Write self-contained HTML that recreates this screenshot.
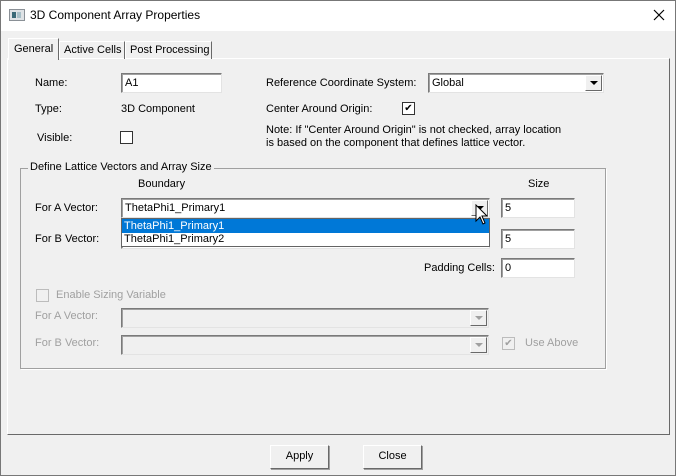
<!DOCTYPE html>
<html><head><meta charset="utf-8"><style>
*{box-sizing:border-box;margin:0;padding:0}
body{width:676px;height:476px;background:#f0f0f0;font:11px "Liberation Sans",sans-serif;color:#000;position:relative;overflow:hidden}
.a{position:absolute;white-space:nowrap}
.win{position:absolute;left:0;top:0;width:676px;height:476px;border:1px solid #777}
.tb{position:absolute;left:1px;top:1px;width:674px;height:30px;background:#fff}
.inp{position:absolute;background:#fff;border:1px solid #7a7a7a;border-right-color:#e3e3e3;border-bottom-color:#e3e3e3;box-shadow:inset 1px 1px 0 #a0a0a0;padding:1px 3px;line-height:16px}
.dis{background:#f0f0f0}
.btn{position:absolute;width:17px;height:16px;top:1px;right:1px;background:#f0f0f0;border:1px solid #fff;border-right-color:#696969;border-bottom-color:#696969}
.btn:after{content:"";position:absolute;left:4px;top:5px;border-left:4px solid transparent;border-right:4px solid transparent;border-top:4px solid #000}
.btn.g:after{border-top-color:#a0a0a0}
.cb{position:absolute;width:13px;height:13px;border:1px solid #333;background:#fff}
.g{color:#a0a0a0}
.pb{position:absolute;width:59px;height:24px;background:#f0f0f0;border:1px solid #fff;border-right-color:#696969;border-bottom-color:#696969;box-shadow:1px 1px 0 #a0a0a0;text-align:center;line-height:21px}
</style></head><body>
<div class="win"></div>
<div class="tb"></div>
<svg class="a" style="left:9px;top:9px" width="16" height="12"><rect x="0.5" y="0.5" width="15" height="11" fill="#dfe3e6" stroke="#8a9096"/><rect x="3" y="3" width="4" height="6" fill="#3a6a78"/><rect x="8" y="3" width="4" height="6" fill="#a8c0c8"/></svg>
<div class="a" style="left:30px;top:8px;font-size:12px">3D Component Array Properties</div>
<svg class="a" style="left:653px;top:9px" width="12" height="12"><path d="M1 1L11 11M11 1L1 11" stroke="#000" stroke-width="1.2"/></svg>
<!-- tab page -->
<div class="a" style="left:7px;top:58px;width:663px;height:377px;border:1px solid #fff;border-right-color:#696969;border-bottom-color:#696969"></div>
<div class="a" style="left:8px;top:38px;width:51px;height:22px;background:#f0f0f0;border:1px solid #fff;border-bottom:none;border-right-color:#696969;padding:4px 0 0 5px">General</div>
<div class="a" style="left:59px;top:41px;width:66px;height:18px;border:1px solid #fff;border-bottom:none;border-right-color:#696969;padding:2px 0 0 4px">Active Cells</div>
<div class="a" style="left:125px;top:41px;width:87px;height:18px;border:1px solid #fff;border-bottom:none;border-right-color:#696969;padding:2px 0 0 4px">Post Processing</div>

<div class="a" style="left:35px;top:77px">Name:</div>
<div class="inp" style="left:121px;top:73px;width:101px;height:20px">A1</div>
<div class="a" style="left:35px;top:103px">Type:</div>
<div class="a" style="left:121px;top:103px">3D Component</div>
<div class="a" style="left:37px;top:132px">Visible:</div>
<div class="cb" style="left:120px;top:131px"></div>

<div class="a" style="left:266px;top:77px">Reference Coordinate System:</div>
<div class="inp" style="left:428px;top:73px;width:176px;height:20px">Global<div class="btn"></div></div>
<div class="a" style="left:266px;top:103px">Center Around Origin:</div>
<div class="cb" style="left:402px;top:102px;font-size:10px;line-height:11px;text-align:center">✔</div>
<div class="a" style="left:266px;top:124px;line-height:13px">Note: If "Center Around Origin" is not checked, array location<br>is based on the component that defines lattice vector.</div>

<!-- group -->
<div class="a" style="left:20px;top:168px;width:586px;height:201px;border:1px solid #a0a0a0;box-shadow:1px 1px 0 #fff"></div>
<div class="a" style="left:28px;top:161px;background:#f0f0f0;padding:0 2px">Define Lattice Vectors and Array Size</div>
<div class="a" style="left:138px;top:178px">Boundary</div>
<div class="a" style="left:528px;top:178px">Size</div>

<div class="a" style="left:35px;top:202px">For A Vector:</div>
<div class="inp" style="left:121px;top:198px;width:369px;height:20px">ThetaPhi1_Primary1<div class="btn"></div></div>
<div class="inp" style="left:501px;top:198px;width:74px;height:20px">5</div>
<div class="a" style="left:35px;top:233px">For B Vector:</div>
<div class="inp" style="left:121px;top:229px;width:369px;height:20px"></div>
<div class="inp" style="left:501px;top:229px;width:74px;height:20px">5</div>
<div class="a" style="left:121px;top:218px;width:369px;height:29px;background:#fff;border:1px solid #646464">
<div style="background:#0078d7;color:#fff;height:14px;line-height:14px;padding-left:2px">ThetaPhi1_Primary1</div>
<div style="height:13px;line-height:13px;padding-left:2px">ThetaPhi1_Primary2</div></div>
<svg class="a" style="left:475px;top:204px" width="14" height="22"><path d="M1 1 L1 17 L5 13 L8 20 L10 19 L7 12 L12 12 Z" fill="#fff" stroke="#000" stroke-width="1"/></svg>

<div class="a" style="left:424px;top:262px;width:65px;text-align:right">Padding Cells:</div>
<div class="inp" style="left:501px;top:258px;width:74px;height:20px">0</div>

<div class="cb" style="left:36px;top:289px;border-color:#bcbcbc;background:#f0f0f0"></div>
<div class="a g" style="left:56px;top:289px">Enable Sizing Variable</div>
<div class="a g" style="left:35px;top:310px">For A Vector:</div>
<div class="inp dis" style="left:121px;top:308px;width:368px;height:20px"><div class="btn g"></div></div>
<div class="a g" style="left:35px;top:337px">For B Vector:</div>
<div class="inp dis" style="left:121px;top:335px;width:368px;height:20px"><div class="btn g"></div></div>
<div class="cb" style="left:502px;top:337px;border-color:#bcbcbc;background:#f0f0f0;color:#a0a0a0;font-size:10px;line-height:11px;text-align:center">✔</div>
<div class="a g" style="left:525px;top:337px">Use Above</div>

<div class="pb" style="left:270px;top:445px">Apply</div>
<div class="pb" style="left:363px;top:445px">Close</div>
</body></html>
